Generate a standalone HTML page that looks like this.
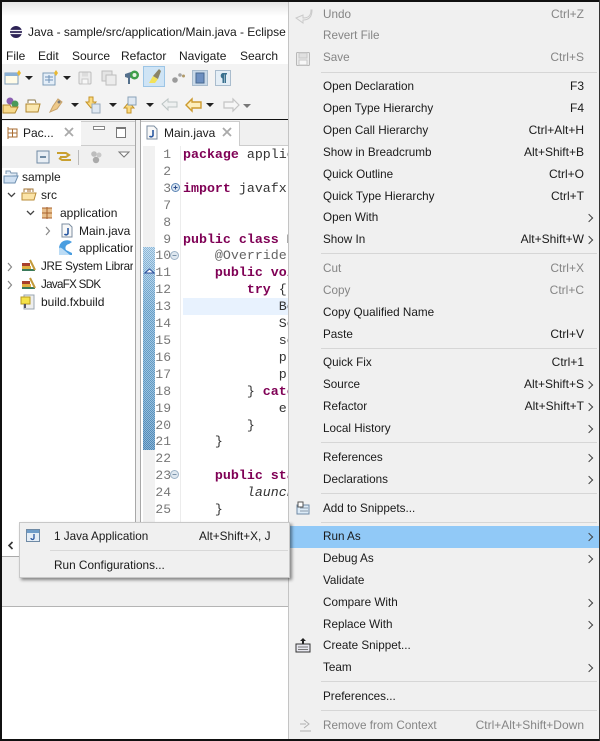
<!DOCTYPE html>
<html><head><meta charset="utf-8"><style>
html,body{margin:0;padding:0;background:#fff}
#r{position:relative;width:600px;height:741px;overflow:hidden;background:#fff;font-family:"Liberation Sans",sans-serif;font-size:12px;color:#1a1a1a;filter:blur(.3px)}
.a{position:absolute}
.t{position:absolute;white-space:nowrap;line-height:16px;height:16px}
.s{position:absolute;white-space:nowrap;line-height:16px;height:16px;right:15px;text-align:right}
.d{color:#858585}
.sep{position:absolute;left:32px;right:2px;height:1px;background:#d6d6d6}
.ch{position:absolute;left:297px;width:5px;height:5px;border-top:1px solid #444;border-right:1px solid #444;transform:rotate(45deg)}
svg{position:absolute;overflow:visible}
pre{position:absolute;margin:0;font-family:"Liberation Mono",monospace;font-size:13.3px;line-height:16.9px;color:#333}
pre b{color:#7f0055}
.dd{position:absolute;width:0;height:0;border-left:4px solid transparent;border-right:4px solid transparent;border-top:4px solid #222}
#m .t{left:34px;font-size:11.7px;margin-top:1px}
#m .s{font-size:12px}
</style></head><body><div id="r">
<!-- window top -->
<div class="a" style="left:2px;top:2px;width:286px;height:14px;background:linear-gradient(#e6e6e6,#fff)"></div>
<svg style="left:9px;top:25px" width="14" height="14" viewBox="0 0 14 14"><circle cx="7" cy="7" r="6" fill="#2c2255"/><path d="M1 5.500h12M1 8.500h12" stroke="#f2f2f6" stroke-width="1.200"/></svg>
<div class="t" style="left:28px;top:24px;font-size:12px;letter-spacing:-.02px">Java - sample/src/application/Main.java - Eclipse</div>
<div class="t" style="left:6px;top:48px">File</div>
<div class="t" style="left:38px;top:48px">Edit</div>
<div class="t" style="left:72px;top:48px">Source</div>
<div class="t" style="left:121px;top:48px">Refactor</div>
<div class="t" style="left:179px;top:48px">Navigate</div>
<div class="t" style="left:240px;top:48px">Search</div>
<!-- toolbar -->
<div class="a" style="left:2px;top:64px;width:286px;height:55px;background:#f3f3f3"></div>
<svg style="left:4px;top:70px" width="18" height="16"><rect x="1" y="3" width="13" height="11" fill="#fffbe8" stroke="#7f9db9"/><rect x="1" y="3" width="13" height="3" fill="#8ab0d4"/><path d="M15 0l2 3-2 3-2-3z" fill="#e8b830"/></svg>
<div class="dd" style="left:25px;top:76px"></div>
<svg style="left:42px;top:70px" width="18" height="16"><rect x="1" y="3" width="12" height="12" fill="#e4eef8" stroke="#7f9db9"/><path d="M3 7h8M3 10h8M7 5v8" stroke="#6f93b8"/><path d="M14 0l2 3-2 3-2-3z" fill="#e8b830"/></svg>
<div class="dd" style="left:63px;top:76px"></div>
<svg style="left:78px;top:71px" width="14" height="14"><rect x="1" y="1" width="12" height="12" rx="1" fill="#ececec" stroke="#bdbdbd"/><rect x="4" y="1.500" width="6" height="4" fill="#dcdcdc"/><rect x="4" y="8" width="6" height="5" fill="#f8f8f8" stroke="#c8c8c8"/></svg>
<svg style="left:101px;top:70px" width="16" height="16"><rect x="1" y="1" width="10" height="10" fill="#e4e4e4" stroke="#bdbdbd"/><rect x="5" y="5" width="10" height="10" fill="#ececec" stroke="#bdbdbd"/></svg>
<svg style="left:124px;top:69px" width="16" height="17"><path d="M1 5l6-2 1 5-2 1v6H4V9L1 8z" fill="#54708c"/><circle cx="10.500" cy="6" r="4.500" fill="#3f9e4a"/><circle cx="10.500" cy="6" r="2" fill="#e6f3e4"/></svg>
<div class="a" style="left:143px;top:66px;width:22px;height:21px;background:#cfe4f5;border:1px solid #9cc5e6;box-sizing:border-box"></div>
<svg style="left:147px;top:68px" width="16" height="17"><path d="M2 15l4-7 5 3-3 4z" fill="#f2e25a"/><path d="M6 8l6-7 2 2-3 8z" fill="#8a8468"/></svg>
<svg style="left:171px;top:71px" width="15" height="14"><circle cx="4" cy="9" r="2.800" fill="#9b9b9b"/><circle cx="9" cy="4" r="1.800" fill="#a5a5a5"/><circle cx="12.500" cy="5" r="1.500" fill="#b09a6a"/></svg>
<svg style="left:192px;top:70px" width="16" height="16"><rect x=".5" y=".5" width="15" height="15" fill="#c9d9e8" stroke="#a9bccd"/><rect x="4" y="3" width="8" height="10" fill="#6d8fc0" stroke="#48688f"/></svg>
<svg style="left:215px;top:70px" width="16" height="16"><rect x=".5" y=".5" width="15" height="15" fill="#e4eef6" stroke="#a9bccd"/><path d="M7 3h5v1.500h-1V13H9.500V4.500H9V13H7.500V8.500a3 3 0 0 1 0-5.500z" fill="#39708e"/></svg>
<svg style="left:2px;top:97px" width="18" height="16"><circle cx="8" cy="4" r="3.500" fill="#8a5fb0"/><circle cx="13" cy="7" r="3.500" fill="#4a9a5a"/><path d="M1 8h7l1 2h7l-3 6H1z" fill="#f7d98a" stroke="#b0872f"/></svg>
<svg style="left:25px;top:98px" width="16" height="15"><path d="M3 5V2h7l1 3" fill="#fff" stroke="#8b7a4b"/><path d="M1 6h14l-2 8H1z" fill="#fae7ae" stroke="#b0872f"/></svg>
<svg style="left:48px;top:97px" width="16" height="16"><path d="M2 15l3-6 5-7 4 3-5 7z" fill="#edc98a" stroke="#c9a36a"/><circle cx="11" cy="5" r="1.500" fill="#777"/></svg>
<div class="dd" style="left:71px;top:103px"></div>
<svg style="left:85px;top:96px" width="16" height="18"><path d="M4 1h4v5h3l-5 6-5-6h3z" fill="#fbdb80" stroke="#c49327"/><rect x="7" y="8" width="8" height="9" fill="#dfe8f2" stroke="#9aaabb"/></svg>
<div class="dd" style="left:109px;top:103px"></div>
<svg style="left:124px;top:96px" width="14" height="18"><path d="M3 17v-5H0l5-6 5 6H7v5z" fill="#fbdb80" stroke="#c49327"/><rect x="4" y="1" width="8" height="8" fill="#dfe8f2" stroke="#8aa2b8"/></svg>
<div class="dd" style="left:146px;top:103px"></div>
<svg style="left:161px;top:97px" width="18" height="14"><path d="M1 7l6-5v3h9v5H7v3z" fill="#eef0f0" stroke="#bcc4c4"/></svg>
<svg style="left:185px;top:98px" width="17" height="14"><path d="M1 7l6-6v3h9v6H7v3z" fill="#fdeebb" stroke="#cc9a2e" stroke-width="1.400"/></svg>
<div class="dd" style="left:206px;top:103px"></div>
<svg style="left:223px;top:98px" width="17" height="14"><path d="M16 7l-6-6v3H1v6h9v3z" fill="#f6f6f6" stroke="#c4c4c4" stroke-width="1.200"/></svg>
<div class="dd" style="left:243px;top:104px;border-top-color:#777"></div>
<!-- frame lines -->
<div class="a" style="left:0;top:119px;width:289px;height:1px;background:#111"></div>
<!-- left view -->
<div class="a" style="left:2px;top:120px;width:286px;height:402px;background:#f0f0f0"></div>
<div class="a" style="left:2px;top:121px;width:79px;height:25px;background:#fff"></div>
<div class="a" style="left:81px;top:121px;width:55px;height:25px;background:#f2f2f2;border-bottom:1px solid #ccc;border-top:1px solid #ccc;box-sizing:border-box"></div>
<svg style="left:6px;top:126px" width="12" height="14"><path d="M2 1v12M2 3h9v8H2M2 7h9M6.500 3v8" stroke="#a86c32" fill="none"/></svg>
<div class="t" style="left:23px;top:125px">Pac...</div>
<svg style="left:64px;top:127px" width="10" height="10"><path d="M1 1l8 8M9 1L1 9" stroke="#aaa" stroke-width="1.800"/></svg>
<div class="a" style="left:93px;top:126px;width:10px;height:2px;background:#fff;border:1px solid #888"></div>
<div class="a" style="left:116px;top:127px;width:8px;height:8px;background:#fff;border:1px solid #777;border-top-width:2px"></div>
<div class="a" style="left:2px;top:146px;width:131px;height:22px;background:#f0f0f0"></div>
<div class="a" style="left:2px;top:168px;width:133px;height:354px;background:#fff"></div>
<div class="a" style="left:135px;top:120px;width:1px;height:402px;background:#a8a8a8"></div>
<svg style="left:36px;top:150px" width="14" height="14"><rect x="1" y="1" width="12" height="12" fill="#e8eef4" stroke="#6f8aa5"/><path d="M4 7h6" stroke="#496a8a" stroke-width="1.500"/></svg>
<svg style="left:56px;top:149px" width="16" height="15"><path d="M1 4h9l3 2-3 2H4M15 11H6l-3-2" fill="none" stroke="#c9a02f" stroke-width="2"/></svg>
<div class="a" style="left:78px;top:150px;width:1px;height:15px;background:#bbb"></div>
<svg style="left:89px;top:150px" width="14" height="14"><circle cx="5" cy="4" r="2.800" fill="#bdbdbd"/><circle cx="10" cy="5" r="2.500" fill="#c8c8c8"/><circle cx="7" cy="10" r="3.200" fill="#aaa"/></svg>
<svg style="left:118px;top:151px" width="12" height="7"><path d="M1 1h10L6 6z" fill="#fff" stroke="#777"/></svg>
<!-- tree -->
<svg style="left:3px;top:170px" width="16" height="14"><path d="M3 4V1h4l1 2h6v3" fill="#dfeaf5" stroke="#7a95b0"/><path d="M1 6h14l-3 7H1z" fill="#cfe0f2" stroke="#6e8fb0"/></svg>
<div class="t" style="left:22px;top:169px">sample</div>
<svg style="left:7px;top:192px" width="9" height="6"><path d="M1 1l3.500 3.500L8 1" fill="none" stroke="#444" stroke-width="1.300"/></svg>
<svg style="left:21px;top:187px" width="16" height="15"><path d="M3 5V2h9v3" fill="#fff" stroke="#a57a3a"/><path d="M7 2v3M9 2v3" stroke="#a86c32"/><path d="M1 6h14l-2 7H1z" fill="#fbe4a8" stroke="#b98d3a"/></svg>
<div class="t" style="left:41px;top:187px">src</div>
<svg style="left:26px;top:210px" width="9" height="6"><path d="M1 1l3.500 3.500L8 1" fill="none" stroke="#444" stroke-width="1.300"/></svg>
<svg style="left:41px;top:206px" width="12" height="14"><rect x="1" y="2" width="10" height="10" fill="#e8c08e"/><path d="M1 7h10M6 1v12M1 2h10M1 12h10" stroke="#a8622c" fill="none"/></svg>
<div class="t" style="left:60px;top:205px">application</div>
<svg style="left:45px;top:226px" width="6" height="10"><path d="M1 1l3.500 4L1 9" fill="none" stroke="#888" stroke-width="1.200"/></svg>
<svg style="left:61px;top:223px" width="12" height="15"><path d="M1 1h7l3 3v10H1z" fill="#f8f8f8" stroke="#7c8ea0"/><path d="M7 5v5.500a2 2 0 0 1-3.500.5" fill="none" stroke="#2a58a0" stroke-width="1.600"/></svg>
<div class="t" style="left:79px;top:223px">Main.java</div>
<svg style="left:58px;top:240px" width="16" height="16"><path d="M1 15V9a8 8 0 0 1 13-7l-3 2a4 4 0 0 0-3 6l6 3v2z" fill="#4a9ee0"/><path d="M1 15V9c0-2 2-2 5 1l6 5z" fill="#bcdcf5"/></svg>
<div class="t" style="left:79px;top:240px;width:54px;overflow:hidden">application</div>
<svg style="left:7px;top:262px" width="6" height="10"><path d="M1 1l3.500 4L1 9" fill="none" stroke="#888" stroke-width="1.200"/></svg>
<svg style="left:21px;top:259px" width="15" height="13"><path d="M1 4h8v3H1z" fill="#a83f2c"/><path d="M1 7h9v3H1z" fill="#e0b040"/><path d="M1 10h13v2H1z" fill="#3a7a5a"/><path d="M9 1l5 10" stroke="#c39a3a" stroke-width="2"/></svg>
<div class="t" style="left:41px;top:259px;width:92px;overflow:hidden;font-size:11.6px;letter-spacing:-.25px">JRE System Library</div>
<svg style="left:7px;top:280px" width="6" height="10"><path d="M1 1l3.500 4L1 9" fill="none" stroke="#888" stroke-width="1.200"/></svg>
<svg style="left:21px;top:277px" width="15" height="13"><path d="M1 4h8v3H1z" fill="#a83f2c"/><path d="M1 7h9v3H1z" fill="#e0b040"/><path d="M1 10h13v2H1z" fill="#3a7a5a"/><path d="M9 1l5 10" stroke="#c39a3a" stroke-width="2"/></svg>
<div class="t" style="left:41px;top:277px;font-size:11.6px;letter-spacing:-.7px">JavaFX SDK</div>
<svg style="left:20px;top:294px" width="16" height="16"><rect x="4" y="1" width="10" height="14" fill="#eee" stroke="#9aa5b0"/><rect x="1" y="3" width="9" height="7" fill="#f4e24a" stroke="#b79a20"/><path d="M5 10v4" stroke="#556" stroke-width="2"/></svg>
<div class="t" style="left:41px;top:294px">build.fxbuild</div>
<!-- editor -->
<div class="a" style="left:140px;top:120px;width:1px;height:402px;background:#a8a8a8"></div>
<div class="a" style="left:141px;top:121px;width:99px;height:25px;background:#fff;border-right:1px solid #ccc;border-top:1px solid #ccc;box-sizing:border-box"></div>
<div class="a" style="left:240px;top:145px;width:48px;height:1px;background:#ccc"></div>
<svg style="left:146px;top:125px" width="12" height="15"><path d="M1 1h7l3 3v10H1z" fill="#f8f8f8" stroke="#7c8ea0"/><path d="M7 5v5.500a2 2 0 0 1-3.500.5" fill="none" stroke="#2a58a0" stroke-width="1.600"/></svg>
<div class="t" style="left:164px;top:125px">Main.java</div>
<svg style="left:222px;top:127px" width="10" height="10"><path d="M1 1l8 8M9 1L1 9" stroke="#aaa" stroke-width="1.800"/></svg>
<div class="a" style="left:141px;top:146px;width:147px;height:376px;background:#fff"></div>
<div class="a" style="left:143px;top:146px;width:12px;height:101px;background:#f1f1f1"></div>
<div class="a" style="left:143px;top:450px;width:12px;height:72px;background:#f1f1f1"></div>
<div class="a" style="left:143px;top:247px;width:12px;height:203px;background:linear-gradient(#b0d6ee,#7fb6da 30%,#74aed4 70%,#5d98c4)"></div>
<div class="a" style="left:143px;top:247px;width:12px;height:203px;background-image:conic-gradient(rgba(255,255,255,.28) 25%,rgba(30,70,130,.22) 0 50%,rgba(255,255,255,.28) 0 75%,rgba(30,70,130,.22) 0);background-size:2px 2px"></div>
<svg style="left:145px;top:268px" width="9" height="6"><path d="M0 5l4.500-4L9 5z" fill="#fff" stroke="#2b4c9b"/></svg>
<div class="a" style="left:180px;top:146px;width:1px;height:376px;background:#ececec"></div>
<div class="a" style="left:183px;top:298px;width:105px;height:17px;background:#e8f2fe"></div>
<pre style="left:155px;top:147px;width:16px;text-align:right;color:#787878;font-size:13px"> 1
 2
 3
 7
 8
 9
10
11
12
13
14
15
16
17
18
19
20
21
22
23
24
25</pre>
<svg style="left:171px;top:183px" width="9" height="9"><circle cx="4.500" cy="4.500" r="4" fill="#d8e4f0" stroke="#5c85b5"/><path d="M2.500 4.500h4M4.500 2.500v4" stroke="#2b4c8b"/></svg>
<svg style="left:170px;top:251px" width="9" height="9"><circle cx="4.500" cy="4.500" r="4" fill="#dfe8f0" stroke="#9cb2c6"/><path d="M2.500 4.500h4" stroke="#7b93aa"/></svg>
<svg style="left:170px;top:470px" width="9" height="9"><circle cx="4.500" cy="4.500" r="4" fill="#dfe8f0" stroke="#9cb2c6"/><path d="M2.500 4.500h4" stroke="#7b93aa"/></svg>
<pre style="left:183px;top:147px;width:105px;height:375px;overflow:hidden"><b>package</b> application;

<b>import</b> javafx.application;


<b>public class</b> Main {
    <span style="color:#646464">@Override</span>
    <b>public void</b> start
        <b>try</b> {
            BorderPane
            Scene scene
            scene.get
            primary
            primary
        } <b>catch</b>
            e.print
        }
    }

    <b>public static</b>
        <i>launch</i>(args);
    }</pre>
<!-- bottom of left -->
<div class="a" style="left:2px;top:522px;width:286px;height:34px;background:#fff"></div>
<div class="a" style="left:0;top:556px;width:288px;height:1px;background:#aaa"></div>
<div class="a" style="left:2px;top:557px;width:286px;height:49px;background:#f0f0f0"></div>
<div class="a" style="left:2px;top:606px;width:286px;height:1px;background:#b4b4b4"></div>
<svg style="left:7px;top:541px" width="7" height="9"><path d="M5.500 1L2 4.500 5.500 8" fill="none" stroke="#333" stroke-width="1.600"/></svg>
<!-- main context menu -->
<div id="m" class="a" style="left:288px;top:2px;width:311px;height:737px;background:#f0f0f0;border-left:1px solid #c4c4c4;box-sizing:border-box;margin-top:0">
<div class="a" style="left:0;top:523.5px;width:311px;height:22px;background:#91c9f7"></div>
<svg style="left:6px;top:7px" width="18" height="15"><path d="M16 1c0 6-3 8-8 8V6L1 9l7 5v-3c6 0 9-3 9-10z" fill="#efefef" stroke="#cacaca"/></svg>
<svg style="left:7px;top:50px" width="14" height="14"><rect x=".5" y=".5" width="13" height="13" rx="1" fill="#ececec" stroke="#b8b8b8"/><rect x="3" y="1" width="8" height="5" fill="#e0e0e0" stroke="#c8c8c8"/><rect x="3" y="8" width="8" height="5" fill="#f8f8f8" stroke="#c8c8c8"/></svg>
<svg style="left:7px;top:499px" width="14" height="15"><path d="M1 4h12v9H1z" fill="#dcebf7" stroke="#6f8aa5"/><path d="M2 1h5v5H2z" fill="#fff" stroke="#555"/><path d="M4 7h8M4 10h8" stroke="#8a9aaa"/></svg>
<svg style="left:6px;top:636px" width="16" height="15"><path d="M8 0l3 3H9v3H7V3H5z" fill="#222"/><rect x="1" y="6" width="14" height="8" fill="#e8e8f0" stroke="#333"/><path d="M3 9h10M3 11.500h10" stroke="#777"/></svg>
<svg style="left:10px;top:717px" width="14" height="13"><path d="M5 1l5 4-5 4M1 12h11M1 5h6" fill="none" stroke="#b0b0b0"/></svg>
<div class="t d" style="top:4px">Undo</div><div class="s d" style="top:4px">Ctrl+Z</div>
<div class="t d" style="top:25px">Revert File</div>
<div class="t d" style="top:47px">Save</div><div class="s d" style="top:47px">Ctrl+S</div>
<div class="sep" style="top:70px"></div>
<div class="t" style="top:76px">Open Declaration</div><div class="s" style="top:76px">F3</div>
<div class="t" style="top:98px">Open Type Hierarchy</div><div class="s" style="top:98px">F4</div>
<div class="t" style="top:120px">Open Call Hierarchy</div><div class="s" style="top:120px">Ctrl+Alt+H</div>
<div class="t" style="top:142px">Show in Breadcrumb</div><div class="s" style="top:142px">Alt+Shift+B</div>
<div class="t" style="top:164px">Quick Outline</div><div class="s" style="top:164px">Ctrl+O</div>
<div class="t" style="top:186px">Quick Type Hierarchy</div><div class="s" style="top:186px">Ctrl+T</div>
<div class="t" style="top:207px">Open With</div><div class="ch" style="top:213px"></div>
<div class="t" style="top:229px">Show In</div><div class="s" style="top:229px">Alt+Shift+W</div><div class="ch" style="top:235px"></div>
<div class="sep" style="top:251px"></div>
<div class="t d" style="top:258px">Cut</div><div class="s d" style="top:258px">Ctrl+X</div>
<div class="t d" style="top:280px">Copy</div><div class="s d" style="top:280px">Ctrl+C</div>
<div class="t" style="top:302px">Copy Qualified Name</div>
<div class="t" style="top:324px">Paste</div><div class="s" style="top:324px">Ctrl+V</div>
<div class="sep" style="top:346px"></div>
<div class="t" style="top:352px">Quick Fix</div><div class="s" style="top:352px">Ctrl+1</div>
<div class="t" style="top:374px">Source</div><div class="s" style="top:374px">Alt+Shift+S</div><div class="ch" style="top:380px"></div>
<div class="t" style="top:396px">Refactor</div><div class="s" style="top:396px">Alt+Shift+T</div><div class="ch" style="top:402px"></div>
<div class="t" style="top:418px">Local History</div><div class="ch" style="top:424px"></div>
<div class="sep" style="top:440px"></div>
<div class="t" style="top:447px">References</div><div class="ch" style="top:453px"></div>
<div class="t" style="top:469px">Declarations</div><div class="ch" style="top:475px"></div>
<div class="sep" style="top:491px"></div>
<div class="t" style="top:498px">Add to Snippets...</div>
<div class="sep" style="top:520px"></div>
<div class="t" style="top:526px">Run As</div><div class="ch" style="top:532px"></div>
<div class="t" style="top:548px">Debug As</div><div class="ch" style="top:554px"></div>
<div class="t" style="top:570px">Validate</div>
<div class="t" style="top:592px">Compare With</div><div class="ch" style="top:598px"></div>
<div class="t" style="top:614px">Replace With</div><div class="ch" style="top:620px"></div>
<div class="t" style="top:635px">Create Snippet...</div>
<div class="t" style="top:657px">Team</div><div class="ch" style="top:663px"></div>
<div class="sep" style="top:679px"></div>
<div class="t" style="top:686px">Preferences...</div>
<div class="sep" style="top:708px"></div>
<div class="t d" style="top:715px">Remove from Context</div><div class="s d" style="top:715px">Ctrl+Alt+Shift+Down</div>
</div>
<!-- submenu -->
<div class="a" style="left:19px;top:522px;width:271px;height:56px;background:#f0f0f0;border:1px solid #c8c8c8;box-sizing:border-box;box-shadow:2px 2px 3px rgba(0,0,0,.45)">
<svg style="left:6px;top:6px" width="14" height="13"><rect x=".5" y=".5" width="13" height="12" fill="#e4edf6" stroke="#6f8aa5"/><rect x="1" y="1" width="12" height="3" fill="#6e9cc8"/><path d="M8 5v4a1.500 1.500 0 0 1-3 0" fill="none" stroke="#2a58a0" stroke-width="1.300"/></svg>
<div class="t" style="left:34px;top:6px;font-size:11.7px">1 Java Application</div>
<div class="t" style="left:179px;top:5px;font-size:11.8px">Alt+Shift+X, J</div>
<div class="a" style="left:30px;top:27px;width:238px;height:1px;background:#d8d8d8"></div>
<div class="t" style="left:34px;top:34px;font-size:11.8px">Run Configurations...</div>
</div>
<!-- black frame -->
<div class="a" style="left:0;top:0;width:600px;height:2px;background:#111"></div>
<div class="a" style="left:0;top:739px;width:600px;height:2px;background:#111"></div>
<div class="a" style="left:0;top:0;width:2px;height:741px;background:#111"></div>
<div class="a" style="left:599px;top:0;width:1px;height:741px;background:#333"></div>
</div></body></html>
